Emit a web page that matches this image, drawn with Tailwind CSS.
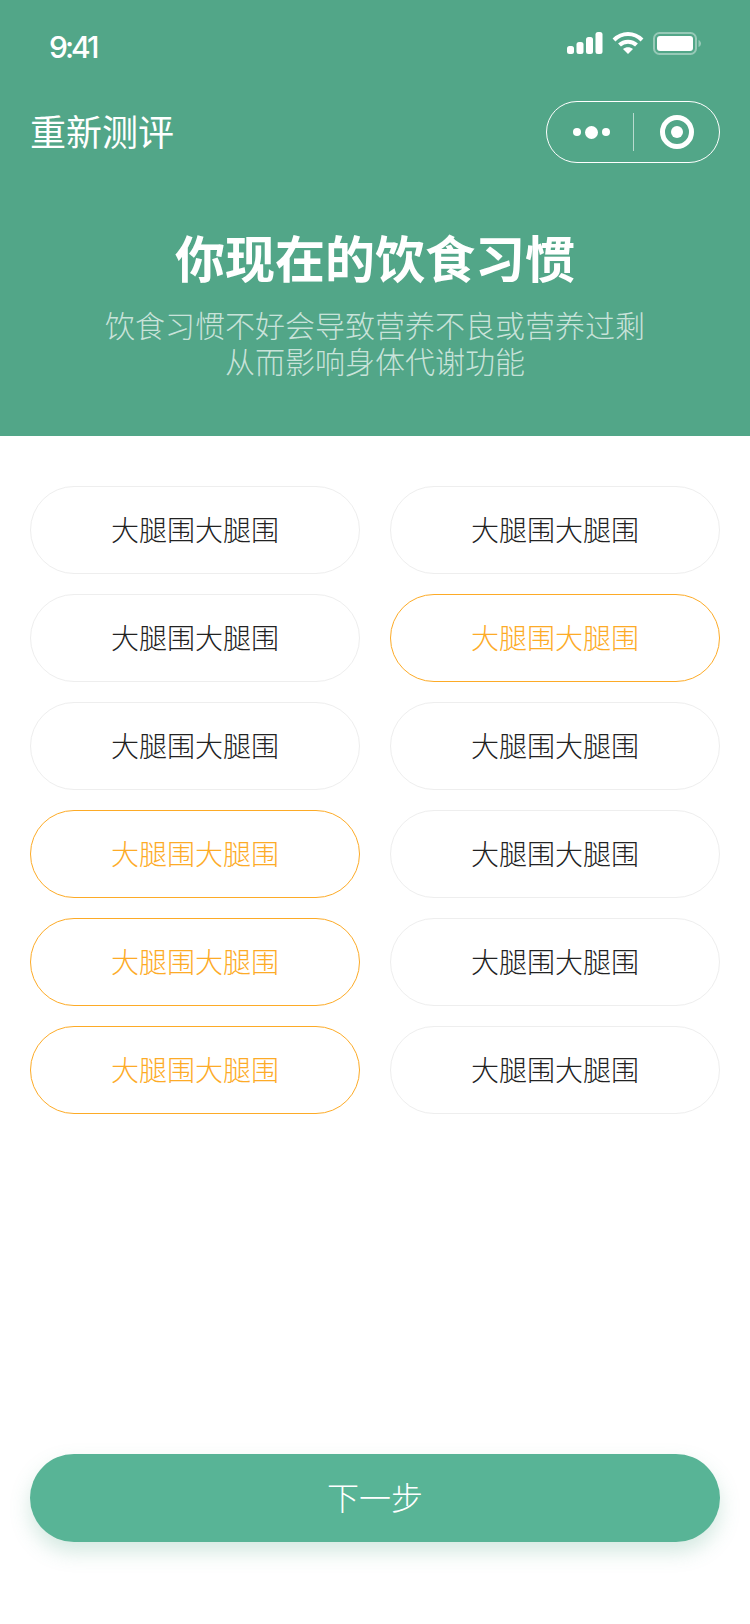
<!DOCTYPE html>
<html lang="zh-CN">
<head>
  <meta charset="UTF-8">
  <title>重新测评</title>
  <script src="https://cdn.jsdelivr.net/npm/@tailwindcss/browser@4"></script>
</head>
<body class="bg-white font-['Noto_Sans_CJK_SC','Noto_Sans',sans-serif]">
  <div class="w-[750px] h-[1624px] flex flex-col">
    <!-- header -->
    <header class="h-[436px] bg-[#52a688] text-white">
      <div class="h-[92px] pl-[49px] pr-[49px] flex items-center justify-between">
        <span class="font-['Inter',sans-serif] font-medium text-[30px] tracking-[-3px] mt-[2px]">9:41</span>
        <div class="flex items-center gap-[9px] mb-[6px]">
          <svg width="36" height="22" viewBox="0 0 36 22" fill="#fff">
            <rect x="0" y="14" width="7" height="8" rx="2.500"/>
            <rect x="9.500" y="10" width="7" height="12" rx="2.500"/>
            <rect x="19" y="5" width="7" height="17" rx="2.500"/>
            <rect x="28.500" y="0" width="7" height="22" rx="2.500"/>
          </svg>
          <svg width="32" height="22" viewBox="0 0 32 22" fill="none" stroke="#fff" stroke-width="4">
            <path d="M2 8 C10 0 22 0 30 8"/>
            <path d="M7.500 13 C12 8.500 20 8.500 24.500 13"/>
            <path d="M11 17 L16 22 L21 17 C18 14.500 14 14.500 11 17Z" fill="#fff" stroke="none"/>
          </svg>
          <svg width="48" height="23" viewBox="0 0 48 23" fill="none">
            <rect x="1" y="1" width="42" height="21" rx="5.500" stroke="#fff" stroke-opacity="0.4" stroke-width="2"/>
            <rect x="4" y="4" width="36" height="15" rx="3" fill="#fff"/>
            <path d="M45.500 8 C47 8.500 48 10 48 11.500 C48 13 47 14.500 45.500 15Z" fill="#fff" fill-opacity="0.4"/>
          </svg>
        </div>
      </div>
      <div class="h-[80px] pl-[30px] pr-[30px] flex items-center justify-between">
        <span class="text-[36px] font-normal leading-none mb-[4px]">重新测评</span>
        <div class="w-[174px] h-[62px] rounded-full border-[1.5px] border-white flex items-center">
          <div class="w-[86px] pl-[2px] flex items-center justify-center gap-[4px]">
            <span class="w-[8px] h-[8px] rounded-full bg-white"></span>
            <span class="w-[13px] h-[13px] rounded-full bg-white"></span>
            <span class="w-[8px] h-[8px] rounded-full bg-white"></span>
          </div>
          <div class="w-px h-[38px] bg-white/60"></div>
          <div class="flex-1 flex items-center justify-center">
            <span class="w-[34px] h-[34px] rounded-full border-[5px] border-white flex items-center justify-center">
              <span class="w-[12px] h-[12px] rounded-full bg-white"></span>
            </span>
          </div>
        </div>
      </div>
      <div class="pt-[54px] text-center">
        <h1 class="text-[50px] leading-[60px] font-semibold">你现在的饮食习惯</h1>
        <p class="mt-[20px] text-[30px] leading-[36px] font-light text-white/70">饮食习惯不好会导致营养不良或营养过剩<br>从而影响身体代谢功能</p>
      </div>
    </header>

    <!-- options -->
    <main class="flex-1 px-[30px] pt-[50px]">
      <div class="grid grid-cols-2 gap-x-[30px] gap-y-[20px] text-[28px] font-light">
        <button class="h-[88px] pb-[2px] rounded-full border border-[#eeeeee] text-[#222222]">大腿围大腿围</button>
        <button class="h-[88px] pb-[2px] rounded-full border border-[#eeeeee] text-[#222222]">大腿围大腿围</button>
        <button class="h-[88px] pb-[2px] rounded-full border border-[#eeeeee] text-[#222222]">大腿围大腿围</button>
        <button class="h-[88px] pb-[2px] rounded-full border border-[#fdab27] text-[#fdab27]">大腿围大腿围</button>
        <button class="h-[88px] pb-[2px] rounded-full border border-[#eeeeee] text-[#222222]">大腿围大腿围</button>
        <button class="h-[88px] pb-[2px] rounded-full border border-[#eeeeee] text-[#222222]">大腿围大腿围</button>
        <button class="h-[88px] pb-[2px] rounded-full border border-[#fdab27] text-[#fdab27]">大腿围大腿围</button>
        <button class="h-[88px] pb-[2px] rounded-full border border-[#eeeeee] text-[#222222]">大腿围大腿围</button>
        <button class="h-[88px] pb-[2px] rounded-full border border-[#fdab27] text-[#fdab27]">大腿围大腿围</button>
        <button class="h-[88px] pb-[2px] rounded-full border border-[#eeeeee] text-[#222222]">大腿围大腿围</button>
        <button class="h-[88px] pb-[2px] rounded-full border border-[#fdab27] text-[#fdab27]">大腿围大腿围</button>
        <button class="h-[88px] pb-[2px] rounded-full border border-[#eeeeee] text-[#222222]">大腿围大腿围</button>
      </div>
    </main>

    <!-- next -->
    <footer class="px-[30px] pb-[82px]">
      <button class="w-full h-[88px] pb-[4px] rounded-full bg-[#58b496] text-white text-[32px] font-light shadow-[0_10px_20px_rgba(82,166,136,0.25)]">下一步</button>
    </footer>
  </div>
</body>
</html>
